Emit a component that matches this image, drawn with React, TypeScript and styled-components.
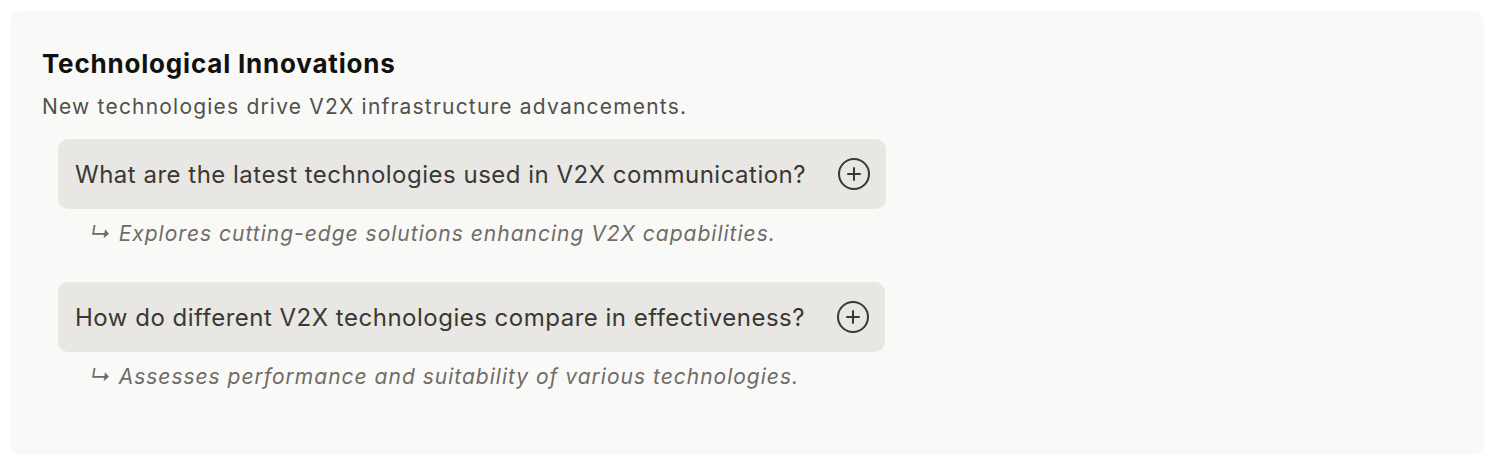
import styled, { createGlobalStyle } from 'styled-components';
// icons
import { CirclePlus } from 'lucide-react';

const GlobalStyle = createGlobalStyle`
  body {
    margin: 0;
    background: #ffffff;
    font-family: Inter, 'Noto Sans', sans-serif;
  }
`;

type Question = {
  question: string;
  summary: string;
};

const questions: Question[] = [
  {
    question: 'What are the latest technologies used in V2X communication?',
    summary: 'Explores cutting-edge solutions enhancing V2X capabilities.',
  },
  {
    question: 'How do different V2X technologies compare in effectiveness?',
    summary: 'Assesses performance and suitability of various technologies.',
  },
];

export default function App() {
  return (
    <Page>
      <GlobalStyle />
      <Card>
        <Title>Technological Innovations</Title>
        <Description>New technologies drive V2X infrastructure advancements.</Description>

        <QuestionList>
          {questions.map((item) => (
            <QuestionItem key={item.question}>
              <QuestionButton type="button">
                <span>{item.question}</span>
                <CirclePlus size={36} strokeWidth={1.35} aria-hidden="true" />
              </QuestionButton>
              <Summary>↳ {item.summary}</Summary>
            </QuestionItem>
          ))}
        </QuestionList>
      </Card>
    </Page>
  );
}

/* ===== styles ===== */

const Page = styled.div`
  padding: 11px 20px 9px 10px;
`;

const Card = styled.section`
  height: 444px;
  box-sizing: border-box;
  padding: 37px 32px 0;
  border-radius: 12px;
  background: #f9f9f7;
`;

const Title = styled.h2`
  margin: 0;
  font-size: 26px;
  line-height: 32px;
  font-weight: 700;
  color: #111110;
  letter-spacing: 0.8px;
`;

const Description = styled.p`
  margin: 13px 0 0;
  font-size: 21px;
  line-height: 28px;
  color: #52504c;
  letter-spacing: 1.2px;
`;

const QuestionList = styled.div`
  display: flex;
  flex-direction: column;
  align-items: flex-start;
  gap: 33px;
  margin: 18px 0 0 16px;
`;

const QuestionItem = styled.div`
  display: flex;
  flex-direction: column;
  align-items: flex-start;
`;

const QuestionButton = styled.button`
  display: flex;
  align-items: center;
  gap: 30px;
  height: 70px;
  padding: 0 14px 0 17px;
  border: none;
  border-radius: 10px;
  background: #e8e7e4;
  font-family: inherit;
  font-size: 24px;
  letter-spacing: 0.5px;
  color: #3a3834;
  cursor: pointer;

  svg {
    color: #3a3834;
    flex-shrink: 0;
  }
`;

const Summary = styled.p`
  margin: 10px 0 0 32px;
  font-size: 21px;
  line-height: 30px;
  font-style: italic;
  color: #6f6c67;
  letter-spacing: 1px;
`;
